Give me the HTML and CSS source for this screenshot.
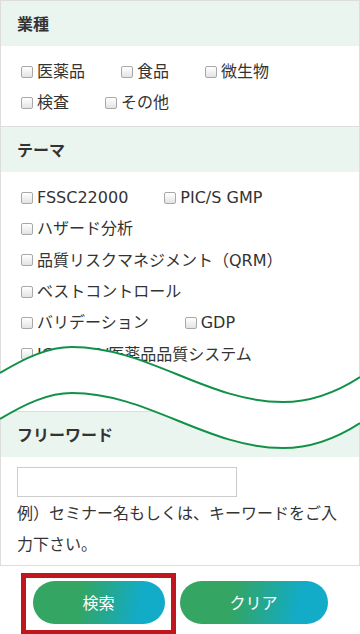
FILE: index.html
```html
<!DOCTYPE html>
<html lang="ja">
<head>
    <meta charset="UTF-8" />
    <meta name="viewport" content="width=device-width, initial-scale=1" />
    <title>セミナー検索</title>
    <link rel="stylesheet" href="styles.css">
</head>
<body>
<div class="page">

    <form class="search-box">
        <div class="search-section">
            <h3 class="search-title">業種</h3>
            <div class="check-list">
                <label class="check"><input type="checkbox">医薬品</label>
                <label class="check"><input type="checkbox">食品</label>
                <label class="check"><input type="checkbox">微生物</label>
                <label class="check"><input type="checkbox">検査</label>
                <label class="check"><input type="checkbox">その他</label>
            </div>
        </div>

        <div class="search-section">
            <h3 class="search-title">テーマ</h3>
            <div class="check-list check-list-theme">
                <label class="check"><input type="checkbox">FSSC22000</label>
                <label class="check"><input type="checkbox">PIC/S GMP</label>
                <label class="check"><input type="checkbox">ハザード分析</label>
                <label class="check"><input type="checkbox">品質リスクマネジメント（QRM）</label>
                <label class="check"><input type="checkbox">ベストコントロール</label>
                <label class="check"><input type="checkbox">バリデーション</label>
                <label class="check"><input type="checkbox">GDP</label>
                <label class="check"><input type="checkbox">ICH Q10/医薬品品質システム</label>
            </div>
        </div>

        <div class="search-section">
            <h3 class="search-title">フリーワード</h3>
            <div class="free-word">
                <input type="text" class="free-input" />
                <p>例）セミナー名もしくは、キーワードをご入力下さい。</p>
            </div>
        </div>
    </form>

    <div class="search-buttons">
        <span class="btn-wrap">
            <button class="btn" type="button">検索</button>
            <span class="mark"></span>
        </span>
        <button class="btn btn-clear" type="button">クリア</button>
    </div>

    <!-- wave cut over the list -->
    <svg class="cut" width="360" height="130" viewBox="0 0 360 130">
        <path fill="#fff" d="M0 43 C25 28, 48 17, 72 17 C148 17, 207 72, 283 72 C315 72, 340 60, 360 47 L360 93 C340 106, 315 118, 283 118 C207 118, 148 63, 72 63 C48 63, 25 74, 0 89 Z" />
        <path fill="none" stroke="#119148" stroke-width="2" d="M0 43 C25 28, 48 17, 72 17 C148 17, 207 72, 283 72 C315 72, 340 60, 360 47" />
        <path fill="none" stroke="#119148" stroke-width="2" d="M0 89 C25 74, 48 63, 72 63 C148 63, 207 118, 283 118 C315 118, 340 106, 360 93" />
    </svg>

</div>
</body>
</html>
```

FILE: styles.css
```css
body {
    margin: 0;
    padding: 0;
    background: #fff;
    color: #333;
    font-family: "DejaVu Sans", "Noto Sans CJK JP", sans-serif;
    font-size: 16px;
}
.page {
    position: relative;
    width: 360px;
    height: 634px;
    overflow: hidden;
}
.search-box {
    margin: 0;
    border: 1px solid #ddd;
}
.search-section + .search-section {
    border-top: 1px solid #ddd;
}
.search-title {
    margin: 0;
    padding: 0 16px;
    background: #eaf5ef;
    font-family: "Noto Sans CJK JP", sans-serif;
    font-size: 16px;
    font-weight: bold;
    line-height: 45px;
    color: #333;
}
.check-list {
    display: flex;
    flex-wrap: wrap;
    column-gap: 36px;
    padding: 10px 20px 8px 20px;
}
.check-list-theme {
    padding-bottom: 41px;
}
.check {
    display: flex;
    align-items: center;
    height: 31px;
    line-height: 31px;
    white-space: nowrap;
}
.check-list-theme .check {
    height: 31.3px;
}
.check input {
    appearance: none;
    -webkit-appearance: none;
    width: 12px;
    height: 12px;
    margin: 0 4px 0 0;
    border: 1px solid #a8a8a8;
    border-radius: 2px;
    background: linear-gradient(#fff, #e3e3e3);
}
.free-word {
    padding: 10px 16px 6px;
}
.free-input {
    display: block;
    box-sizing: border-box;
    width: 220px;
    height: 30px;
    margin: 0;
    border: 1px solid #ccc;
    border-radius: 0;
}
.free-word p {
    margin: 0;
    line-height: 31px;
    font-family: "Noto Sans CJK JP", sans-serif;
}
.search-buttons {
    display: flex;
    justify-content: center;
    gap: 15px;
    padding-top: 15px;
}
.btn-wrap {
    position: relative;
    display: flex;
}
.btn {
    width: 148px;
    height: 43px;
    border: none;
    border-radius: 22px;
    background: linear-gradient(100deg, #34a562 35%, #12abc8 80%);
    color: #fff;
    font-family: "Noto Sans CJK JP", sans-serif;
    font-size: 16px;
    cursor: pointer;
}
.btn-wrap .btn {
    width: 132px;
}
.mark {
    position: absolute;
    left: -12px;
    top: -8px;
    right: -11px;
    bottom: -11px;
    border: 5px solid #c0171f;
}
.cut {
    position: absolute;
    left: 0;
    top: 330px;
}
```
